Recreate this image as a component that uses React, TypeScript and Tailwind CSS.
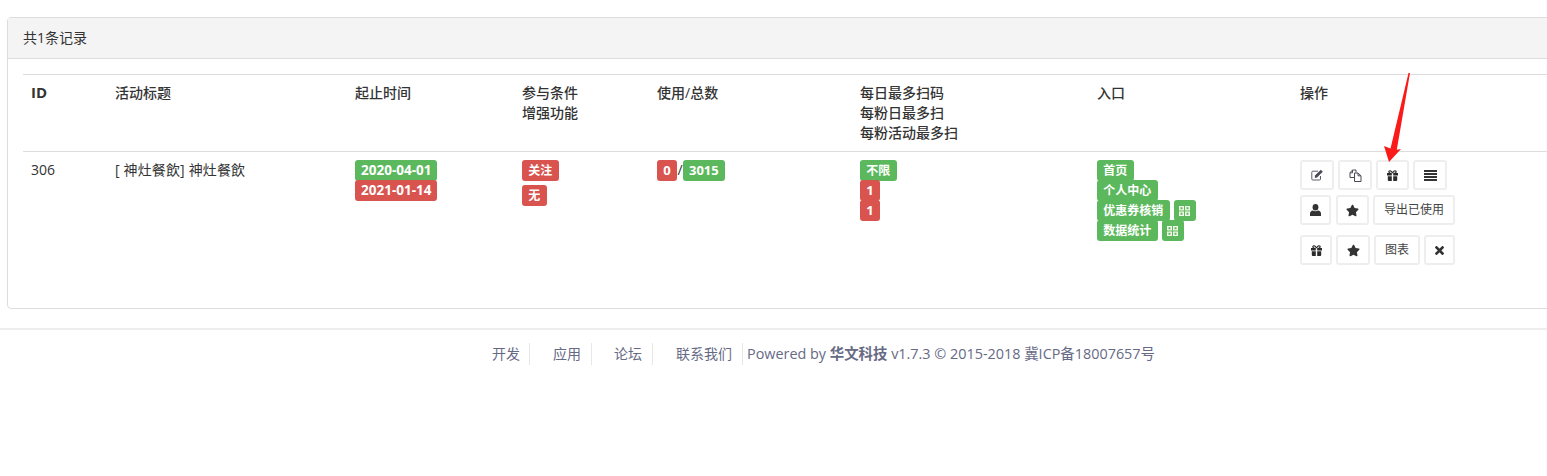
import React from "react";
import { FaStar } from "react-icons/fa";

const font = "font-['Open_Sans','Noto_Sans_CJK_SC',sans-serif]";

function Badge({ color, num, children, className = "" }: { color: "g" | "r"; num?: string; children: React.ReactNode; className?: string }) {
  return (
    <span
      className={`inline-block h-[21px] rounded-[3px] leading-[21px] font-bold whitespace-nowrap text-white ${
        num ?? "px-[6.35px] text-[12px]"
      } ${color === "g" ? "bg-[#5cb85c]" : "bg-[#d9534f]"} ${className}`}
    >
      {children}
    </span>
  );
}

function Qr() {
  return (
    <span className="flex h-[21px] w-[22px] items-center justify-center rounded-[3px] bg-[#5cb85c]">
      <svg width="11" height="10" viewBox="0 0 11 10" aria-hidden="true">
        <path
          fillRule="evenodd"
          d="M0 0h5v4.500H0zM1.500 1.300v1.900h2V1.300zM6 0h5v4.500H6zM7.500 1.300v1.900h2V1.300zM0 5.500h5V10H0zM1.500 6.800v1.900h2V6.800zM6 5.500h5V10H6zM7.500 6.800v1.900h2V6.800z"
          fill="#f2f8e8"
        />
      </svg>
    </span>
  );
}

function Btn({ w, children }: { w: string; children: React.ReactNode }) {
  return (
    <span className={`flex h-[30px] items-center justify-center rounded-[3px] border-2 border-[#eeeeee] bg-white text-[12px] text-[#444444] ${w}`}>
      {children}
    </span>
  );
}

function IconEdit() {
  return (
    <svg width="13" height="12" viewBox="0 0 13 12" fill="none" aria-hidden="true">
      <path d="M9.500 7v3a1 1 0 0 1-1 1H1.800a1 1 0 0 1-1-1V3.200a1 1 0 0 1 1-1H7" stroke="#5d5d6a" />
      <path d="M4 6.500L9.800 0.800L11.800 2.800L6 8.600L3.800 9Z" fill="#4a4a55" />
    </svg>
  );
}

function IconCopy() {
  return (
    <svg width="13" height="13" viewBox="0 0 13 13" fill="none" stroke="#4a4a55" aria-hidden="true">
      <path d="M5.500 8.500H1V3.800L3.500 1H7V3.500" />
      <path d="M1 3.800H3.500V1" />
      <path d="M5.500 4H9L12 6.800V12.500H5.500Z" fill="#ffffff" />
      <path d="M9 4V6.800H12" />
    </svg>
  );
}

function IconGift() {
  return (
    <svg width="11" height="11" viewBox="0 0 11 11" aria-hidden="true">
      <path d="M0 3h4.800v2.600H0zM6.200 3H11v2.600H6.200zM0.800 6.200h4V11H1.800a1 1 0 0 1-1-1zM6.200 6.200h4V10a1 1 0 0 1-1 1H6.200z" fill="#2b2b2b" />
      <path d="M5.500 3C4.500 0.800 3 0.500 2.300 0.900C1.500 1.400 2 3 3.500 3M5.500 3C6.500 0.800 8 0.500 8.700 0.900C9.500 1.400 9 3 7.500 3" fill="none" stroke="#2b2b2b" strokeWidth="1.200" />
    </svg>
  );
}

function IconBars() {
  return (
    <svg width="13" height="11" viewBox="0 0 13 11" aria-hidden="true">
      <path d="M0 0h13v2H0zM0 3h13v2H0zM0 6h13v2H0zM0 9h13v2H0z" fill="#333333" />
    </svg>
  );
}

function IconUser() {
  return (
    <svg width="11" height="12" viewBox="0 0 11 12" aria-hidden="true">
      <ellipse cx="5.500" cy="3.200" rx="2.900" ry="3.200" fill="#333333" />
      <path d="M0 12V9.500C0 7.800 1.500 6.700 2.800 6.500C4.300 7.500 6.700 7.500 8.200 6.500C9.500 6.700 11 7.800 11 9.500V12Z" fill="#333333" />
    </svg>
  );
}

function IconX() {
  return (
    <svg width="9" height="9" viewBox="0 0 9 9" aria-hidden="true">
      <path d="M1.500 1.500L7.500 7.500M7.500 1.500L1.500 7.500" stroke="#333333" strokeWidth="2.600" strokeLinecap="square" />
    </svg>
  );
}

export default function App() {
  const cell = "px-[8px] py-[8px]";
  const head = "px-[8px] py-[8px] font-medium";
  return (
    <div className={`relative h-[476px] w-[1547px] overflow-hidden bg-white text-[14px] leading-[20px] text-[#333333] ${font}`}>
      <div className="mt-[17px] ml-[7px] w-[1560px] rounded-[4px] border border-[#dddddd] bg-white">
        <div className="h-[41px] border-b border-[#dddddd] bg-[#f4f4f4] px-[15px] leading-[40px]">共1条记录</div>
        <div className="px-[15px] pt-[15px] pb-[35px]">
          <table className="w-full table-fixed border-collapse border-t border-[#dddddd]">
            <colgroup>
              <col className="w-[84px]" />
              <col className="w-[240px]" />
              <col className="w-[167px]" />
              <col className="w-[135px]" />
              <col className="w-[203px]" />
              <col className="w-[237px]" />
              <col className="w-[203px]" />
              <col />
            </colgroup>
            <thead>
              <tr className="border-b border-[#dddddd] text-left align-top">
                <th className="h-[76px] px-[8px] pt-[7px] pb-[8px] text-[15px] font-bold">ID</th>
                <th className={head}>活动标题</th>
                <th className={head}>起止时间</th>
                <th className={head}>参与条件<br />增强功能</th>
                <th className={head}>使用/总数</th>
                <th className={head}>每日最多扫码<br />每粉日最多扫<br />每粉活动最多扫</th>
                <th className={head}>入口</th>
                <th className={head}>操作</th>
              </tr>
            </thead>
            <tbody>
              <tr className="align-top">
                <td className={cell}>306</td>
                <td className={`${cell} tracking-[0.15px]`}>[ 神灶餐飲] 神灶餐飲</td>
                <td className={cell}>
                  <div className="flex flex-col items-start">
                    <Badge color="g" num="px-[6px] text-[13.5px]">2020-04-01</Badge>
                    <Badge color="r" num="px-[6px] text-[13.5px]" className="-mt-px">2021-01-14</Badge>
                  </div>
                </td>
                <td className={cell}>
                  <div className="flex flex-col items-start gap-[4px]">
                    <Badge color="r">关注</Badge>
                    <Badge color="r">无</Badge>
                  </div>
                </td>
                <td className={cell}>
                  <div className="flex items-start">
                    <Badge color="r" num="w-[20px] text-center text-[13px]">0</Badge>
                    <span className="w-[6px] text-center">/</span>
                    <Badge color="g" num="px-[6px] text-[13px]">3015</Badge>
                  </div>
                </td>
                <td className={cell}>
                  <div className="flex flex-col items-start">
                    <Badge color="g">不限</Badge>
                    <Badge color="r" num="w-[20px] text-center text-[13px]" className="-mt-px">1</Badge>
                    <Badge color="r" num="w-[20px] text-center text-[13px]" className="-mt-px">1</Badge>
                  </div>
                </td>
                <td className={cell}>
                  <div className="flex flex-col items-start">
                    <Badge color="g">首页</Badge>
                    <Badge color="g" className="-mt-px">个人中心</Badge>
                    <div className="-mt-px flex gap-[4px]">
                      <Badge color="g">优惠券核销</Badge>
                      <Qr />
                    </div>
                    <div className="-mt-px flex gap-[4px]">
                      <Badge color="g">数据统计</Badge>
                      <Qr />
                    </div>
                  </div>
                </td>
                <td className={cell}>
                  <div className="flex flex-col items-start">
                    <div className="flex gap-[4px]">
                      <Btn w="w-[34px]"><IconEdit /></Btn>
                      <Btn w="w-[34px]"><IconCopy /></Btn>
                      <Btn w="w-[33px]"><IconGift /></Btn>
                      <Btn w="w-[34px]"><IconBars /></Btn>
                    </div>
                    <div className="mt-[5px] flex gap-[4px]">
                      <Btn w="w-[31px] mr-px"><IconUser /></Btn>
                      <Btn w="w-[33px]"><FaStar size={13} color="#333333" /></Btn>
                      <Btn w="w-[82px]">导出已使用</Btn>
                    </div>
                    <div className="mt-[10px] flex gap-[4px]">
                      <Btn w="w-[32px]"><IconGift /></Btn>
                      <Btn w="w-[34px]"><FaStar size={13} color="#333333" /></Btn>
                      <Btn w="w-[46px]">图表</Btn>
                      <Btn w="w-[31px]"><IconX /></Btn>
                    </div>
                  </div>
                </td>
              </tr>
            </tbody>
          </table>
        </div>
      </div>

      <div className="mt-[19px] flex h-[49px] items-center justify-center border-t-2 border-[#eeeeee] pl-[100px] text-[14px] text-[#676a85]">
        <div className="flex items-center">
          <span className="h-[22px] border-r border-[#e7e7e7] pr-[9px] leading-[22px]">开发</span>
          <span className="h-[22px] border-r border-[#e7e7e7] pr-[10px] pl-[23px] leading-[22px]">应用</span>
          <span className="h-[22px] border-r border-[#e7e7e7] pr-[10px] pl-[22px] leading-[22px]">论坛</span>
          <span className="h-[22px] border-r border-[#e7e7e7] pr-[10px] pl-[23px] leading-[22px]">联系我们</span>
          <span className="pl-[4px] text-[14.4px] whitespace-nowrap">Powered by <b>华文科技</b> v1.7.3 © 2015-2018 冀ICP备18007657号</span>
        </div>
      </div>

      <svg className="absolute top-0 left-0" width="1547" height="476" viewBox="0 0 1547 476" fill="none" aria-hidden="true">
        <path d="M1410 73L1408.500 73L1390.500 148.500L1384 146L1389 162L1401 149L1396.800 149.800Z" fill="#fa1a1a" />
      </svg>
    </div>
  );
}
